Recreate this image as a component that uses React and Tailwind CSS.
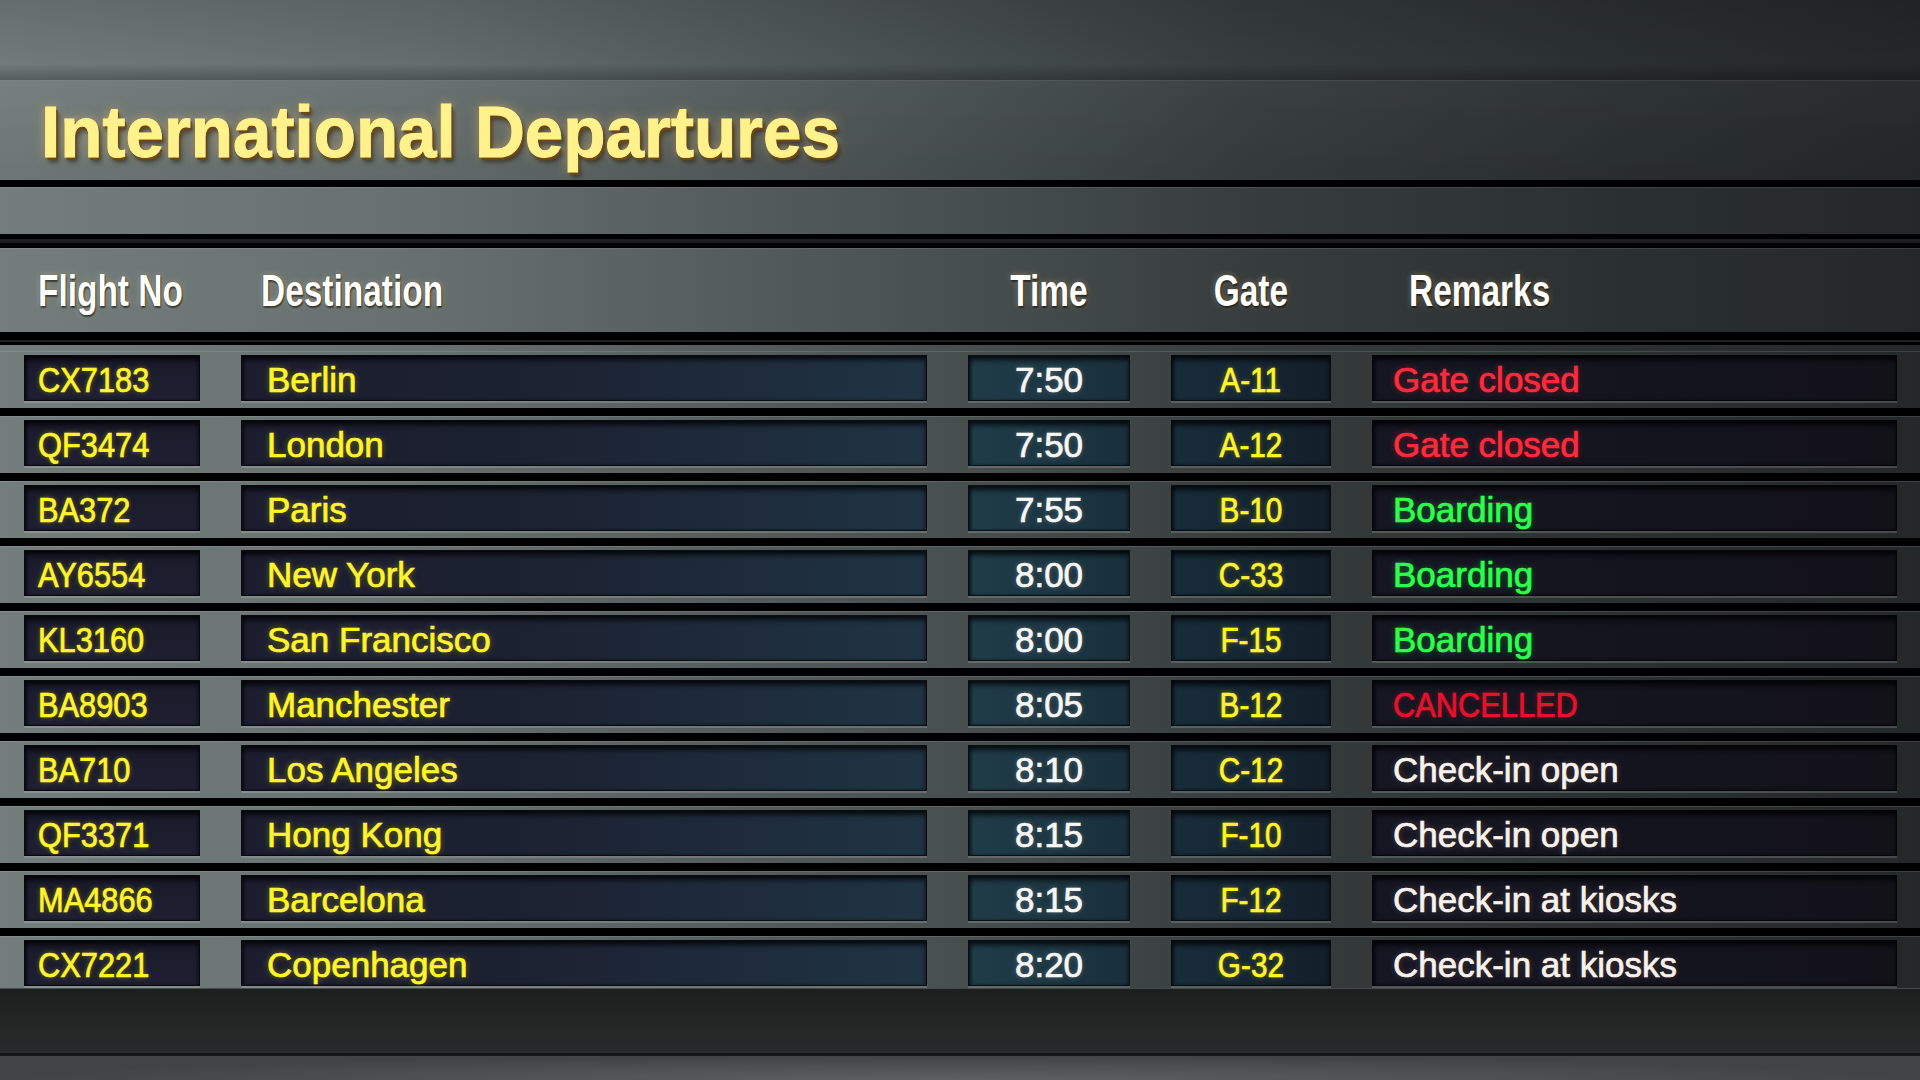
const flights = [
  { no: 'CX7183', dest: 'Berlin', time: '7:50', gate: 'A-11', remark: 'Gate closed', tone: 'red' },
  { no: 'QF3474', dest: 'London', time: '7:50', gate: 'A-12', remark: 'Gate closed', tone: 'red' },
  { no: 'BA372', dest: 'Paris', time: '7:55', gate: 'B-10', remark: 'Boarding', tone: 'green' },
  { no: 'AY6554', dest: 'New York', time: '8:00', gate: 'C-33', remark: 'Boarding', tone: 'green' },
  { no: 'KL3160', dest: 'San Francisco', time: '8:00', gate: 'F-15', remark: 'Boarding', tone: 'green' },
  { no: 'BA8903', dest: 'Manchester', time: '8:05', gate: 'B-12', remark: 'CANCELLED', tone: 'cancel' },
  { no: 'BA710', dest: 'Los Angeles', time: '8:10', gate: 'C-12', remark: 'Check-in open', tone: 'white' },
  { no: 'QF3371', dest: 'Hong Kong', time: '8:15', gate: 'F-10', remark: 'Check-in open', tone: 'white' },
  { no: 'MA4866', dest: 'Barcelona', time: '8:15', gate: 'F-12', remark: 'Check-in at kiosks', tone: 'white' },
  { no: 'CX7221', dest: 'Copenhagen', time: '8:20', gate: 'G-32', remark: 'Check-in at kiosks', tone: 'white' },
]

const toneClass = {
  red: 'text-[#ff2b3d] [text-shadow:0_0_6px_rgba(255,40,60,0.45)]',
  green: 'text-[#2cff4c] [text-shadow:0_0_6px_rgba(40,255,80,0.4)]',
  cancel: 'inline-block scale-x-[0.88] origin-left text-[#e8112c] [text-shadow:0_0_6px_rgba(230,20,40,0.45)]',
  white: 'text-[#f6f2ee] [text-shadow:0_0_2px_rgba(60,20,10,0.9),0_0_6px_rgba(255,230,210,0.25)]',
}

const yellow = 'text-[#fff42e] [text-shadow:0_0_6px_rgba(255,230,0,0.45)]'
const box = 'h-[46px] flex items-center whitespace-nowrap border border-black/70 shadow-[inset_0_4px_5px_rgba(0,0,0,0.75),inset_2px_0_3px_rgba(0,0,0,0.4),0_2px_0_rgba(255,255,255,0.16)]'
const cols = 'grid grid-cols-[176px_686px_162px_160px_1fr] gap-x-[41px] pl-[24px] pr-[23px]'
const headText = 'inline-block whitespace-nowrap scale-x-[0.76] text-[44px] font-bold leading-none text-white [text-shadow:0_0_1px_#2a1a08,1px_2px_2px_rgba(0,0,0,0.55),0_0_7px_rgba(255,215,150,0.35)]'

function Row({ f, last }) {
  return (
    <div
      className={`pt-[4px] shadow-[inset_0_1px_0_rgba(255,255,255,0.12)] ${
        last ? 'pb-[2px]' : 'pb-[7px] border-b-8 border-black'
      }`}
    >
      <div className={`${cols} text-[35px] leading-none [-webkit-text-stroke:0.7px_currentColor]`}>
        <div className={`${box} pl-[13px] pt-[3px] bg-gradient-to-b from-[#191a29] to-[#1e2032]`}>
          <span className={`inline-block scale-x-[0.88] origin-left ${yellow}`}>{f.no}</span>
        </div>
        <div className={`${box} pl-[25px] pt-[3px] bg-[linear-gradient(90deg,#1b1d2e_0%,#1c2131_40%,#1f3443_100%)]`}>
          <span className={yellow}>{f.dest}</span>
        </div>
        <div className={`${box} justify-center pt-[3px] bg-[linear-gradient(90deg,#1f3c48,#19303c)]`}>
          <span className="text-[#f7f7f5] [text-shadow:0_0_5px_rgba(255,255,255,0.3)]">{f.time}</span>
        </div>
        <div className={`${box} justify-center pt-[3px] bg-[linear-gradient(90deg,#172d3a,#131e2a)]`}>
          <span className={`inline-block scale-x-[0.85] ${yellow}`}>{f.gate}</span>
        </div>
        <div className={`${box} pl-[20px] pt-[2px] bg-[linear-gradient(90deg,#151622,#131219)] shadow-[inset_0_4px_5px_rgba(0,0,0,0.75),inset_-1px_0_0_rgba(255,255,255,0.15),0_2px_0_rgba(255,255,255,0.12)]`}>
          <span className={toneClass[f.tone]}>{f.remark}</span>
        </div>
      </div>
    </div>
  )
}

export default function App() {
  return (
    <div className="w-[1920px] h-[1080px] overflow-hidden flex flex-col font-['Liberation_Sans',Arial,sans-serif] bg-[linear-gradient(90deg,#737d7b_0%,#66706e_22%,#4d5554_45%,#373d3d_65%,#2a2f2f_85%,#242828_100%)]">
      {/* top band */}
      <div className="h-[80px] bg-[linear-gradient(180deg,rgba(0,0,0,0.12),rgba(0,0,0,0.02)_80%,rgba(0,0,0,0.25))]" />

      {/* title */}
      <div className="h-[100px] flex items-center pl-[41px] border-t border-white/10 bg-[linear-gradient(180deg,rgba(255,255,255,0.02),rgba(0,0,0,0.06))]">
        <h1 className="inline-block whitespace-nowrap scale-x-[0.96] origin-left text-[72px] font-bold leading-none pt-[2px] text-[#fff18c] [-webkit-text-stroke:1px_#fff18c] [text-shadow:0_0_1px_#d48a1c,2px_3px_0_#6a4716,3px_5px_5px_rgba(0,0,0,0.55),0_0_12px_rgba(255,205,110,0.5)]">
          International Departures
        </h1>
      </div>
      <div className="h-[7px] bg-black" />

      <div className="h-[47px] border-t border-white/10" />
      <div className="h-[14px] flex flex-col">
        <div className="h-[5px] bg-black" />
        <div className="h-[4px] bg-[#1b1f1f]" />
        <div className="h-[5px] bg-black" />
      </div>

      {/* header */}
      <div className={`${cols} h-[84px] items-center border-t border-white/10`}>
        <div className="pl-[14px] whitespace-nowrap">
          <span className={`${headText} origin-left`}>Flight No</span>
        </div>
        <div className="pl-[20px]">
          <span className={`${headText} origin-left`}>Destination</span>
        </div>
        <div className="flex justify-center">
          <span className={headText}>Time</span>
        </div>
        <div className="flex justify-center">
          <span className={headText}>Gate</span>
        </div>
        <div className="pl-[37px]">
          <span className={`${headText} origin-left`}>Remarks</span>
        </div>
      </div>
      <div className="h-[13px] flex flex-col">
        <div className="h-[8px] bg-black" />
        <div className="h-[2px] bg-[#1d2121]" />
        <div className="h-[3px] bg-black" />
      </div>

      {/* rows */}
      <div className="pt-[6px]">
        {flights.map((f, i) => (
          <Row key={f.no} f={f} last={i === flights.length - 1} />
        ))}
      </div>

      {/* lower frame */}
      <div className="h-[65px] border-t border-white/15 bg-[linear-gradient(180deg,#1b1f1e,#242827_70%,#272b2b)]" />
      <div className="h-[3px] bg-[#151817]" />
      <div className="flex-1 bg-[radial-gradient(ellipse_at_50%_100%,#5d6162,#404445_70%)]" />
    </div>
  )
}
